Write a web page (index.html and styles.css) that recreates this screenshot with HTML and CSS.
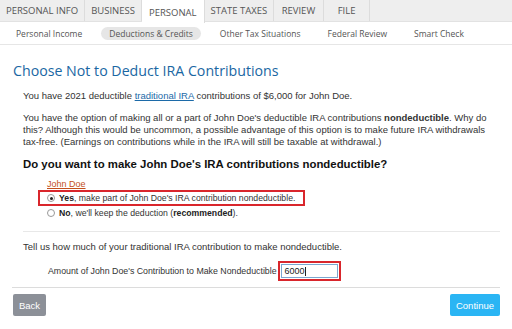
FILE: index.html
```html
<!DOCTYPE html>
<html>
<head>
<meta charset="utf-8">
<link rel="stylesheet" href="styles.css">
</head>
<body>
<nav class="tabs">
  <span class="tab">PERSONAL INFO</span>
  <span class="tab">BUSINESS</span>
  <span class="tab active">PERSONAL</span>
  <span class="tab">STATE TAXES</span>
  <span class="tab review">REVIEW</span>
  <span class="tab file">FILE</span>
</nav>
<nav class="subtabs">
  <span class="sub">Personal Income</span>
  <span class="sub current">Deductions &amp; Credits</span>
  <span class="sub">Other Tax Situations</span>
  <span class="sub">Federal Review</span>
  <span class="sub">Smart Check</span>
</nav>
<main class="page">
  <h1 class="title">Choose Not to Deduct IRA Contributions</h1>
  <div class="content">
    <p class="text">You have 2021 deductible <a class="link" href="#">traditional IRA</a> contributions of $6,000 for John Doe.</p>
    <p class="text">You have the option of making all or a part of John Doe's deductible IRA contributions <b>nondeductible</b>. Why do this? Although this would be uncommon, a possible advantage of this option is to make future IRA withdrawals tax-free. (Earnings on contributions while in the IRA will still be taxable at withdrawal.)</p>
    <h2 class="question">Do you want to make John Doe's IRA contributions nondeductible?</h2>
    <div class="options">
      <div class="person">John Doe</div>
      <label class="option selected"><span class="radio on"></span><span><b>Yes</b>, make part of John Doe's IRA contribution nondeductible.</span></label>
      <label class="option"><span class="radio"></span><span><b>No</b>, we'll keep the deduction (<b>recommended</b>).</span></label>
    </div>
    <hr class="rule">
    <p class="text">Tell us how much of your traditional IRA contribution to make nondeductible.</p>
    <div class="amount">
      <span class="amount-label">Amount of John Doe's Contribution to Make Nondeductible</span>
      <span class="input-wrap"><span class="input">6000<span class="caret"></span></span></span>
    </div>
  </div>
  <footer class="actions">
    <button class="btn back">Back</button>
    <button class="btn continue">Continue</button>
  </footer>
</main>
</body>
</html>
```
FILE: styles.css
```css
* { box-sizing: border-box; }
html, body { margin: 0; padding: 0; background: #fff; }
body { width: 512px; height: 329px; overflow: hidden; font-family: "Liberation Sans", Arial, sans-serif; color: #333; }

.tabs {
  display: flex;
  height: 22px;
  background: #eeeeee;
  border-bottom: 1px solid #e2e2e2;
  font-family: "Open Sans", sans-serif;
  font-size: 9.5px;
  color: #555;
}
.tab {
  display: flex;
  align-items: center;
  padding: 0 6px;
  border-right: 1px solid #dcdcdc;
  white-space: nowrap;
}
.tab.active { background: #fff; height: 23px; padding: 2px 7px 0; }
.tab.review { padding: 0 7.5px; }
.tab.file { padding: 0 14px; }

.subtabs {
  display: flex;
  align-items: center;
  height: 23px;
  border-bottom: 1px solid #e6e6e6;
  font-family: "Open Sans", sans-serif;
  font-size: 8.5px;
  color: #555;
  padding-left: 8px;
  gap: 11px;
}
.sub { padding: 0 8px; height: 13px; line-height: 13px; border-radius: 7px; white-space: nowrap; }
.sub.current { background: #e6e6e6; }

.page { padding: 0 12px; }
.title {
  font-family: "Open Sans", sans-serif;
  font-weight: 400;
  font-size: 14.2px;
  color: #1a67a3;
  margin: 16px 0 10px 1px;
}
.content { padding-left: 11px; }
.text { font-size: 9.5px; line-height: 12px; margin: 0 0 10px; }
.link { color: #1c6aa8; }
.question { font-size: 11.4px; font-weight: 700; color: #111; margin: 10px 0 9px; }
.options { padding-left: 16px; font-size: 8.7px; white-space: nowrap; }
.person { color: #c4501c; text-decoration: underline; font-size: 9px; margin-left: 8px; margin-bottom: 1px; }
.option { display: flex; align-items: center; gap: 4px; height: 13px; padding-left: 8px; }
.option.selected { border: 2px solid #d9262c; width: 267px; height: 16px; margin-left: -1px; padding-left: 7px; }
.option b { color: #222; }
.radio { flex: none; width: 8px; height: 8px; border: 1px solid #999; border-radius: 50%; display: inline-block; position: relative; background: #fff; }
.radio.on::after { content: ""; position: absolute; left: 1.5px; top: 1.5px; width: 3px; height: 3px; border-radius: 50%; background: #222; }
.rule { border: 0; border-top: 1px solid #e8e8e8; margin: 12px 0 9px; }
.amount { display: flex; align-items: center; padding-left: 25px; font-size: 8.8px; margin-top: -2px; }
.input-wrap { border: 2px solid #d9262c; padding: 1px; margin-left: 1px; }
.input { display: flex; align-items: center; width: 57px; height: 14px; border: 1px solid #7aa7d0; font-size: 9px; padding-left: 3px; color: #222; }
.caret { display: inline-block; width: 1px; height: 9px; background: #222; }
.actions {
  display: flex;
  justify-content: space-between;
  border-top: 1px solid #dcdcdc;
  margin-top: 6px;
  padding-top: 6px;
}
.btn { border: 0; border-radius: 2px; color: #fff; font-family: "Liberation Sans", Arial, sans-serif; font-size: 9.5px; height: 22px; padding: 0 6px; }
.back { background: #8c9098; margin-left: 1px; }
.continue { background: #2ab5f4; margin-right: 0; }
```
